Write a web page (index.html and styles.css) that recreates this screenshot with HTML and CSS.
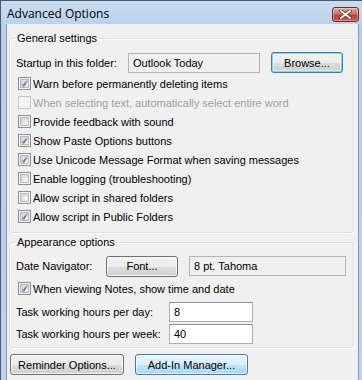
FILE: index.html
```html
<!DOCTYPE html>
<html lang="en">
<head>
    <meta charset="UTF-8">
    <title>Advanced Options</title>
    <link rel="stylesheet" href="styles.css">
</head>
<body>
    <div class="window">
        <div class="titlebar">
            <span class="title">Advanced Options</span>
            <span class="close">
                <svg width="13" height="9" viewBox="0 0 13 9">
                    <path d="M2 1 L11 8 M11 1 L2 8" stroke="#5a2420" stroke-width="3.4" stroke-linecap="square"/>
                    <path d="M2 1 L11 8 M11 1 L2 8" stroke="#fff" stroke-width="2" stroke-linecap="square"/>
                </svg>
            </span>
        </div>
        <div class="client">
            <fieldset class="group general">
                <legend>General settings</legend>
                <div class="row folder">
                    <span class="label">Startup in this folder:</span>
                    <span class="field readonly folder-field">Outlook Today</span>
                    <span class="btn default browse">Browse...</span>
                </div>
                <div class="check on"><span class="box"></span>Warn before permanently deleting items</div>
                <div class="check disabled"><span class="box"></span>When selecting text, automatically select entire word</div>
                <div class="check"><span class="box"></span>Provide feedback with sound</div>
                <div class="check on"><span class="box"></span>Show Paste Options buttons</div>
                <div class="check on"><span class="box"></span>Use Unicode Message Format when saving messages</div>
                <div class="check"><span class="box"></span>Enable logging (troubleshooting)</div>
                <div class="check"><span class="box"></span>Allow script in shared folders</div>
                <div class="check on"><span class="box"></span>Allow script in Public Folders</div>
            </fieldset>
            <fieldset class="group appearance">
                <legend>Appearance options</legend>
                <div class="row date">
                    <span class="label date-label">Date Navigator:</span>
                    <span class="btn font-btn">Font...</span>
                    <span class="field readonly font-field">8 pt. Tahoma</span>
                </div>
                <div class="check on"><span class="box"></span>When viewing Notes, show time and date</div>
                <div class="row hours">
                    <span class="label hours-label">Task working hours per day:</span>
                    <span class="field hours-field">8</span>
                </div>
                <div class="row hours">
                    <span class="label hours-label">Task working hours per week:</span>
                    <span class="field hours-field">40</span>
                </div>
            </fieldset>
            <div class="buttons">
                <span class="btn reminder">Reminder Options...</span>
                <span class="btn hover addin">Add-In Manager...</span>
            </div>
        </div>
    </div>
</body>
</html>
```

FILE: styles.css
```css
body {
    margin: 0;
    background: #fff;
    font-family: "Liberation Sans", Arial, sans-serif;
    font-size: 11px;
    color: #000;
}
.window {
    width: 362px;
    height: 380px;
    box-sizing: border-box;
    border-top: 1px solid #4a5a70;
    border-left: 1px solid #4a5a70;
    background: linear-gradient(#c9dcf1, #b7cfea 30px, #bcd3ec);
    padding: 0 3px 0 5px;
    display: flex;
    flex-direction: column;
}
.titlebar {
    height: 23px;
    display: flex;
    align-items: center;
    justify-content: space-between;
}
.title {
    font-family: "Open Sans", "Noto Sans", sans-serif;
    font-size: 12px;
    padding-left: 1px;
    margin-top: 2px;
    color: #000;
}
.close {
    width: 25px;
    height: 13px;
    margin-right: 0;
    margin-top: 3px;
    border: 1px solid #6b2b26;
    border-radius: 3px;
    background: linear-gradient(#e4a89e, #cf7566 45%, #bd4030 55%, #c95a48);
    box-shadow: inset 0 0 0 1px rgba(255, 255, 255, 0.35);
    display: flex;
    align-items: center;
    justify-content: center;
}
.client {
    flex: 1;
    background: #f0f0f0;
    border-left: 1px solid #8a9bb0;
    border-right: 1px solid #8a9bb0;
    padding: 0 4px 0 2px;
}
.group {
    margin: 8px 0 0 0;
    padding: 7px 6px 6px 6px;
    border: 1px solid #d5dfe5;
    border-radius: 3px;
    box-shadow: inset 1px 1px 0 #fff, 1px 1px 0 #fff;
}
.group legend {
    padding: 0 2px;
    margin-left: -1px;
    line-height: 13px;
}
.appearance {
    margin-top: 3px;
    padding-top: 7px;
    padding-bottom: 3px;
}
.row {
    display: flex;
    align-items: center;
}
.folder {
    height: 21px;
    margin-bottom: 1px;
}
.label {
    flex: none;
}
.folder .label {
    width: 112px;
}
.field {
    box-sizing: border-box;
    height: 20px;
    border: 1px solid #abadb3;
    border-top-color: #8e8f8f;
    background: #fff;
    padding: 0 4px;
    line-height: 18px;
}
.readonly {
    background: #f0f0f0;
    border-color: #b4b4b4;
}
.folder-field {
    width: 132px;
}
.btn {
    box-sizing: border-box;
    height: 21px;
    border: 1px solid #707070;
    border-radius: 3px;
    background: linear-gradient(#f2f2f2, #ebebeb 50%, #dddddd 51%, #cfcfcf);
    box-shadow: inset 0 0 0 1px rgba(255, 255, 255, 0.7);
    display: flex;
    align-items: center;
    justify-content: center;
}
.default {
    border-color: #3c7fb1;
    box-shadow: inset 0 0 0 1px #7ad4f5, inset 0 0 0 2px rgba(255, 255, 255, 0.5);
}
.hover {
    border-color: #3c7fb1;
    background: linear-gradient(#eaf6fd, #d9f0fc 50%, #bee6fd 51%, #a7d9f5);
}
.browse {
    width: 72px;
    margin-left: 11px;
}
.check {
    height: 19px;
    display: flex;
    align-items: center;
    padding-left: 2px;
}
.check .box {
    box-sizing: border-box;
    width: 13px;
    height: 13px;
    margin-right: 2px;
    border: 1px solid #8e8f8f;
    background: #f4f4f4;
    box-shadow: inset 0 0 0 1px #f4f4f4, inset 0 0 0 2px #b6b9bf, inset 2px 2px 3px 2px #d4d7dc;
}
.check.on .box {
    background: #f4f4f4 url("data:image/svg+xml;utf8,<svg xmlns='http://www.w3.org/2000/svg' width='11' height='11'><path d='M2.5 5.5 L4.5 8 L8.5 2' fill='none' stroke='%234a5f97' stroke-width='1.8'/></svg>") center / 11px 11px no-repeat;
}
.check.disabled {
    color: #a0a0a0;
}
.check.disabled .box {
    border-color: #c8c8c8;
    box-shadow: none;
    background: #f4f4f4;
}
.date {
    height: 20px;
    margin-bottom: 3px;
}
.date-label {
    width: 90px;
}
.font-btn {
    width: 72px;
    height: 21px;
}
.font-field {
    width: 157px;
    margin-left: 11px;
    height: 20px;
}
.hours {
    height: 20px;
    margin-top: 2px;
}
.hours-label {
    width: 153px;
}
.hours-field {
    width: 84px;
}
.appearance .check {
    margin-bottom: 4px;
}
.buttons {
    display: flex;
    gap: 11px;
    margin: 6px 0 0 1px;
}
.reminder {
    width: 114px;
}
.addin {
    width: 113px;
}
```
